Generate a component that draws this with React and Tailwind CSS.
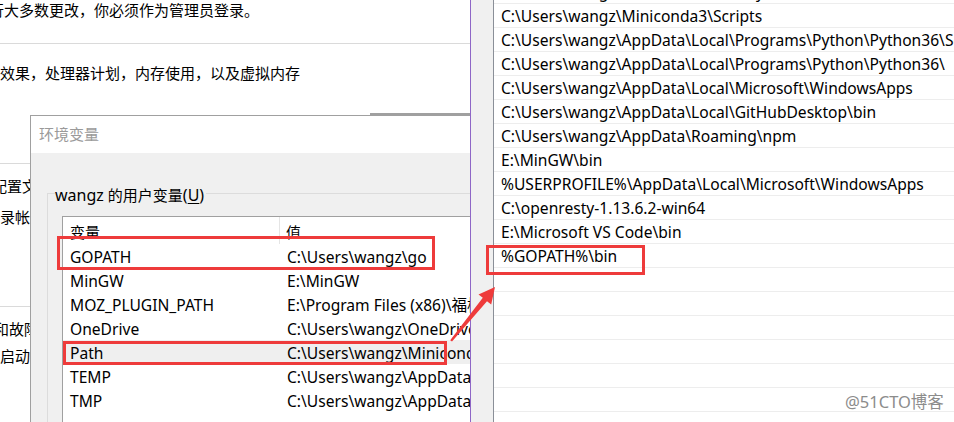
import React from "react";

const FONT = { fontFamily: '"Noto Sans", "Noto Sans CJK SC", sans-serif' };

const userVars = [
  ["GOPATH", "C:\\Users\\wangz\\go", false],
  ["MinGW", "E:\\MinGW", false],
  ["MOZ_PLUGIN_PATH", "E:\\Program Files (x86)\\福桥浏览器\\plugins\\", false],
  ["OneDrive", "C:\\Users\\wangz\\OneDrive", false],
  ["Path", "C:\\Users\\wangz\\Miniconda3;C:\\Users\\wangz\\Miniconda3\\Library", true],
  ["TEMP", "C:\\Users\\wangz\\AppData\\Local\\Temp", false],
  ["TMP", "C:\\Users\\wangz\\AppData\\Local\\Temp", false],
];

const pathItems = [
  "C:\\Users\\wangz\\Miniconda3\\Library\\bin",
  "C:\\Users\\wangz\\Miniconda3\\Scripts",
  "C:\\Users\\wangz\\AppData\\Local\\Programs\\Python\\Python36\\Scripts\\",
  "C:\\Users\\wangz\\AppData\\Local\\Programs\\Python\\Python36\\",
  "C:\\Users\\wangz\\AppData\\Local\\Microsoft\\WindowsApps",
  "C:\\Users\\wangz\\AppData\\Local\\GitHubDesktop\\bin",
  "C:\\Users\\wangz\\AppData\\Roaming\\npm",
  "E:\\MinGW\\bin",
  "%USERPROFILE%\\AppData\\Local\\Microsoft\\WindowsApps",
  "C:\\openresty-1.13.6.2-win64",
  "E:\\Microsoft VS Code\\bin",
  "%GOPATH%\\bin",
  "", "", "", "", "", "", "", "",
];

export default function App() {
  return (
    <div className="relative w-[954px] h-[422px] overflow-hidden bg-white text-black" style={FONT}>
      {/* background settings page */}
      <div className="flex flex-col text-[15px] w-[470px] overflow-hidden">
        <div className="h-[20px] shrink-0 flex items-center whitespace-nowrap">
          <span className="ml-[-56px]">若要进行大多数更改，你必须作为管理员登录。</span>
        </div>
        <div className="mt-[23px] h-px shrink-0 bg-[#dadada]" />
        <div className="mt-[19px] h-[20px] shrink-0 flex items-center whitespace-nowrap">
          <span className="ml-[-30px]">视觉效果，处理器计划，内存使用，以及虚拟内存</span>
        </div>
        <div className="mt-[80px] h-px shrink-0 bg-[#dadada]" />
        <div className="mt-[12px] h-[20px] shrink-0 flex items-center whitespace-nowrap">
          <span className="ml-[-38px]">用户配置文件</span>
        </div>
        <div className="mt-[11px] h-[20px] shrink-0 flex items-center whitespace-nowrap">
          <span className="ml-[-30px]">与登录帐户相关的桌面设置</span>
        </div>
        <div className="mt-[79px] h-px shrink-0 bg-[#dadada]" />
        <div className="mt-[12px] h-[20px] shrink-0 flex items-center whitespace-nowrap">
          <span className="ml-[-36px]">启动和故障恢复</span>
        </div>
        <div className="mt-[7px] h-[20px] shrink-0 flex items-center whitespace-nowrap">
          <span className="ml-[-30px]">系统启动、系统故障和调试信息</span>
        </div>
      </div>

      {/* 环境变量 dialog */}
      <div className="absolute left-[30px] top-[115px] w-[470px] h-[420px] border-l border-t border-[#a0a0a0] bg-[#f0f0f0] flex flex-col">
        <div className="h-[37px] shrink-0 bg-white flex items-center pl-[8px] pb-[1px] text-[15px] text-[#9a9a9a]">环境变量</div>
        <div className="relative shrink-0 ml-[16px] mt-[40px] border-l border-t border-[#dcdcdc] flex flex-col">
          <div className="absolute left-[7px] top-[-9px] h-[20px] flex items-center bg-[#f0f0f0] pr-[2px] whitespace-nowrap text-[16px]">
            wangz <span className="text-[15px] ml-[4px]">的用户变量</span>(<span className="underline underline-offset-2">U</span>)
          </div>
          <div className="ml-[14px] mt-[22px] border-l border-t border-[#a0a0a0] bg-white flex flex-col">
            <div className="h-[27px] shrink-0 flex items-center text-[15px]">
              <div className="w-[217px] shrink-0 h-full pl-[7px] pt-[3px] flex items-center border-r border-[#e5e5e5]">变量</div>
              <div className="pl-[6px] pt-[3px]">值</div>
            </div>
            {userVars.map(([k, v, sel]) => (
              <div key={k} className={"h-[24px] shrink-0 flex items-center pt-[4px] text-[15.6px] whitespace-nowrap " + (sel ? "bg-[#efefef]" : "")}>
                <div className="w-[218px] shrink-0 pl-[7px]">{k}</div>
                <div className="pl-[6px]">{v}</div>
              </div>
            ))}
            <div className="h-[40px] shrink-0" />
          </div>
        </div>
      </div>
      <div className="absolute left-[370px] top-[113px] w-[100px] h-[2px] bg-[#a0a0a0]" />

      {/* Edit env var window (Path list) */}
      <div className="absolute left-[470px] top-0 right-0 bottom-0 border-l border-[#8e66c6] bg-[#f0f0f0] flex">
        <div className="w-[23px] shrink-0 border-r border-[#8a8f98]" />
        <div className="flex-1 bg-white overflow-hidden">
          <div className="mt-[-21px] flex flex-col">
            {pathItems.map((p, i) => (
              <div key={i} className="h-[24px] shrink-0 border-t border-[#ededed] flex items-center pl-[7px] pt-[2px] text-[15.6px] whitespace-nowrap">
                {p}
              </div>
            ))}
          </div>
        </div>
      </div>

      {/* annotations */}
      <div className="absolute left-[57px] top-[236px] w-[378px] h-[34px] border-[3px] border-[#ee3b3b]" />
      <div className="absolute left-[63px] top-[341px] w-[384px] h-[24px] border-[3px] border-[#ee3b3b]" />
      <div className="absolute left-[486px] top-[245px] w-[159px] h-[30px] border-[3px] border-[#ee3b3b]" />
      <svg className="absolute left-0 top-0 pointer-events-none" width="954" height="422" viewBox="0 0 954 422">
        <polygon
          points="495,287 491.2,304.6 487,301.2 452,341.6 450.2,340.3 482.8,297.7 478.5,294.4"
          fill="#ee3b3b"
        />
      </svg>

      <div className="absolute left-[845px] top-[391px] h-[22px] flex items-center text-[16.5px] text-[#8c8c8c] whitespace-nowrap">
        @51CTO博客
      </div>
    </div>
  );
}
